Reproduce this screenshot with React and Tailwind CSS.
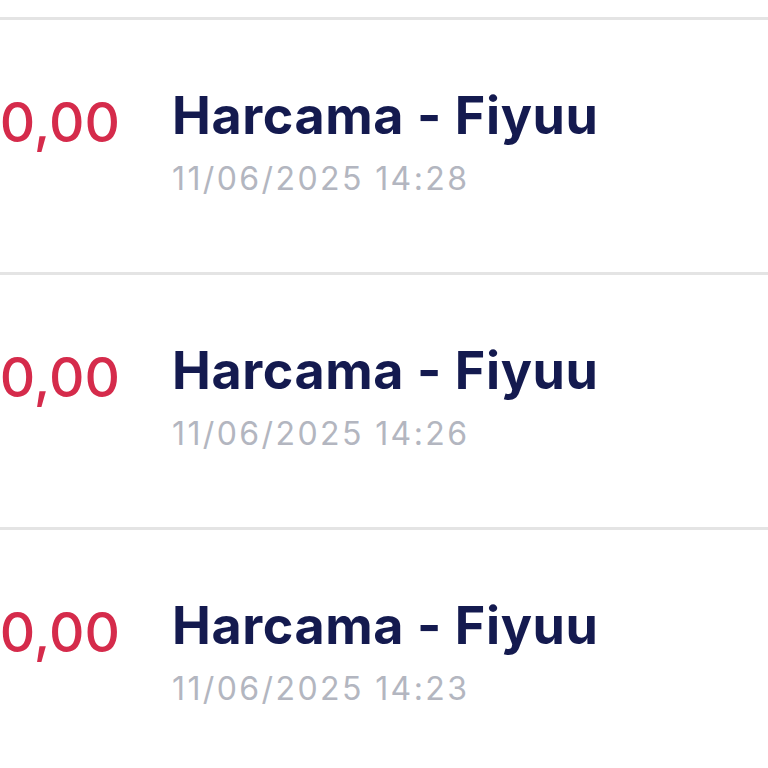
import React from "react";

const rows = [
  { date: "11/06/2025 14:28" },
  { date: "11/06/2025 14:26" },
  { date: "11/06/2025 14:23" },
];

export default function App() {
  return (
    <div
      className="w-[768px] h-[768px] overflow-hidden bg-white"
      style={{ fontFamily: "Inter, 'Noto Sans', sans-serif" }}
    >
      <div className="h-[20px] border-b-[3px] border-[#e4e4e4]" />
      {rows.map((r, i) => (
        <div
          key={i}
          className="h-[255px] border-b-[3px] border-[#e4e4e4] flex items-start pt-[70px]"
        >
          <div className="w-[120px] shrink-0 flex justify-end mt-[5px]">
            <span className="whitespace-nowrap text-[55px] leading-none font-medium text-[#d52b4b]">
              0,00
            </span>
          </div>
          <div className="ml-[52px] flex flex-col">
            <span className="whitespace-nowrap text-[52px] leading-none font-bold tracking-[0.6px] text-[#141a4f]">
              Harcama - Fiyuu
            </span>
            <span className="whitespace-nowrap mt-[21px] text-[32px] leading-none tracking-[2.4px] text-[#b3b6c0]">
              {r.date}
            </span>
          </div>
        </div>
      ))}
    </div>
  );
}
